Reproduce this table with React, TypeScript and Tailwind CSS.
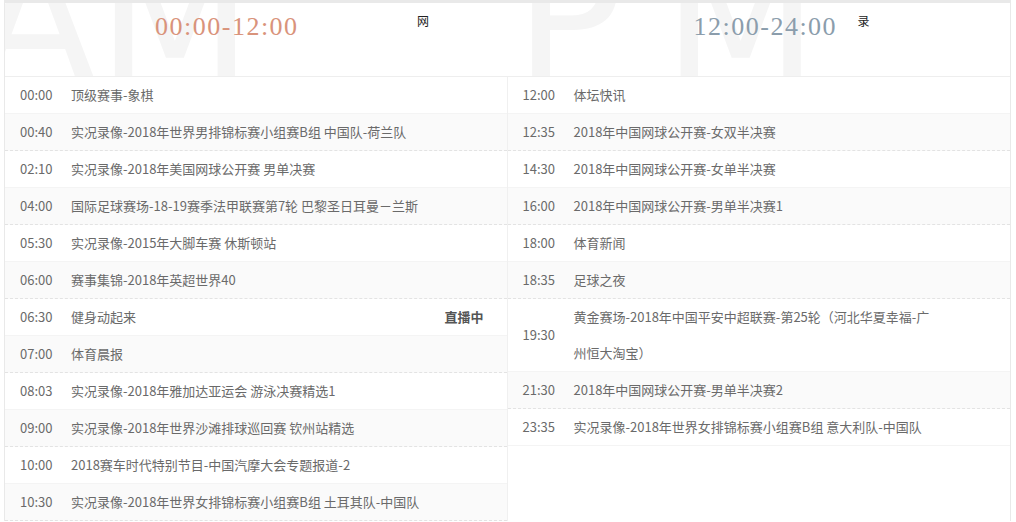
import React from "react";

type Show = { time: string; title: string; live?: boolean };

const amShows: Show[] = [
  { time: "00:00", title: "顶级赛事-象棋" },
  { time: "00:40", title: "实况录像-2018年世界男排锦标赛小组赛B组 中国队-荷兰队" },
  { time: "02:10", title: "实况录像-2018年美国网球公开赛 男单决赛" },
  { time: "04:00", title: "国际足球赛场-18-19赛季法甲联赛第7轮 巴黎圣日耳曼－兰斯" },
  { time: "05:30", title: "实况录像-2015年大脚车赛 休斯顿站" },
  { time: "06:00", title: "赛事集锦-2018年英超世界40" },
  { time: "06:30", title: "健身动起来", live: true },
  { time: "07:00", title: "体育晨报" },
  { time: "08:03", title: "实况录像-2018年雅加达亚运会 游泳决赛精选1" },
  { time: "09:00", title: "实况录像-2018年世界沙滩排球巡回赛 钦州站精选" },
  { time: "10:00", title: "2018赛车时代特别节目-中国汽摩大会专题报道-2" },
  { time: "10:30", title: "实况录像-2018年世界女排锦标赛小组赛B组 土耳其队-中国队" },
];

const pmShows: Show[] = [
  { time: "12:00", title: "体坛快讯" },
  { time: "12:35", title: "2018年中国网球公开赛-女双半决赛" },
  { time: "14:30", title: "2018年中国网球公开赛-女单半决赛" },
  { time: "16:00", title: "2018年中国网球公开赛-男单半决赛1" },
  { time: "18:00", title: "体育新闻" },
  { time: "18:35", title: "足球之夜" },
  { time: "19:30", title: "黄金赛场-2018年中国平安中超联赛-第25轮（河北华夏幸福-广州恒大淘宝）" },
  { time: "21:30", title: "2018年中国网球公开赛-男单半决赛2" },
  { time: "23:35", title: "实况录像-2018年世界女排锦标赛小组赛B组 意大利队-中国队" },
];

function ShowRow({ show, index }: { show: Show; index: number }) {
  const odd = index % 2 === 1;
  return (
    <div
      className={
        odd
          ? "flex items-center leading-[36px] bg-[#fafafa] border-b border-dashed border-[#e3e3e3] pl-[15px]"
          : "flex items-center leading-[36px] bg-white border-b border-[#f4f4f4] pl-[15px]"
      }
    >
      <span className="w-[51px] shrink-0">{show.time}</span>
      <span className="w-[356px]">{show.title}</span>
      {show.live && <span className="ml-auto mr-[23px] font-bold text-[#555]">直播中</span>}
    </div>
  );
}

export default function App() {
  return (
    <div className="h-[522px] w-full overflow-hidden bg-white font-['Noto_Sans_CJK_SC','Noto_Sans',sans-serif] text-[13px] text-[#6a6a6a]">
      <div className="ml-[4px] mr-[5px] border-x border-t-[3px] border-[#e9e9e9]">
        {/* header */}
        <div className="flex h-[74px] border-b border-[#eeeeee]">
          <div className="relative flex w-1/2 items-start overflow-hidden pl-[150px]">
            <span className="pointer-events-none absolute left-[-31px] top-[-72px] font-['DejaVu_Sans',sans-serif] text-[180px] leading-none text-[#f5f5f5]">
              AM
            </span>
            <span className="relative mt-[11px] w-[262px] font-['Liberation_Serif',serif] text-[26px] leading-none tracking-[1.5px] text-[#d9937b]">
              00:00-12:00
            </span>
            <span className="relative mt-[12px] text-[12px] leading-none text-[#222]">网</span>
          </div>
          <div className="relative flex w-1/2 items-start overflow-hidden pl-[186px]">
            <span className="pointer-events-none absolute left-[7px] top-[-72px] font-['DejaVu_Sans',sans-serif] text-[180px] leading-none tracking-[40px] text-[#f5f5f5]">
              PM
            </span>
            <span className="relative mt-[11px] w-[164px] font-['Liberation_Serif',serif] text-[26px] leading-none tracking-[1.5px] text-[#8b9dac]">
              12:00-24:00
            </span>
            <span className="relative mt-[12px] text-[12px] leading-none text-[#222]">录</span>
          </div>
        </div>
        {/* schedule */}
        <div className="grid grid-cols-2 items-start">
          <div className="border-r border-[#f0f0f0]">
            {amShows.map((s, i) => (
              <ShowRow key={s.time} show={s} index={i} />
            ))}
          </div>
          <div>
            {pmShows.map((s, i) => (
              <ShowRow key={s.time} show={s} index={i} />
            ))}
          </div>
        </div>
      </div>
    </div>
  );
}
